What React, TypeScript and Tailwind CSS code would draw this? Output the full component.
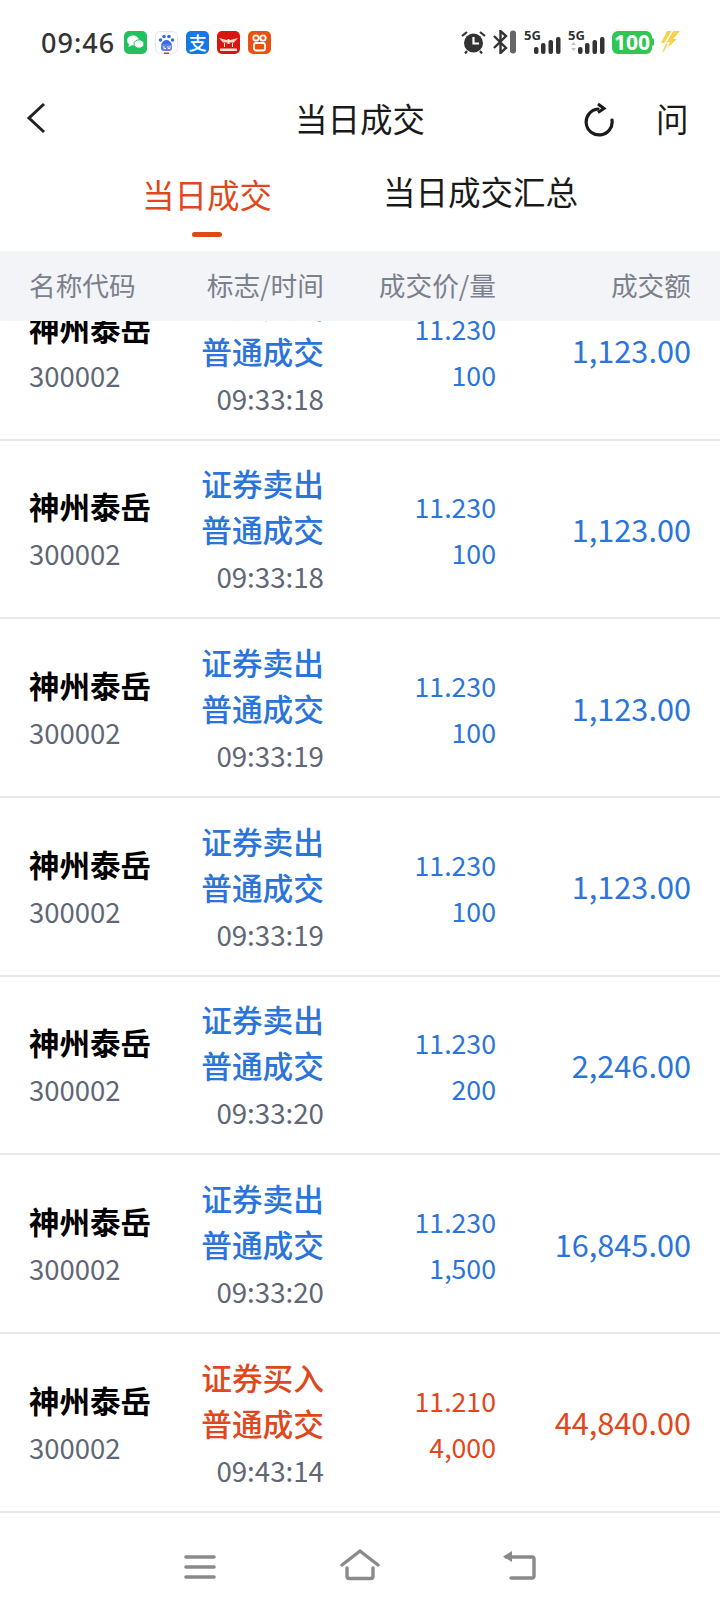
const rows = [
  { tag: "证券卖出", time: "09:33:18", price: "11.230", qty: "100", amount: "1,123.00" },
  { tag: "证券卖出", time: "09:33:18", price: "11.230", qty: "100", amount: "1,123.00" },
  { tag: "证券卖出", time: "09:33:19", price: "11.230", qty: "100", amount: "1,123.00" },
  { tag: "证券卖出", time: "09:33:19", price: "11.230", qty: "100", amount: "1,123.00" },
  { tag: "证券卖出", time: "09:33:20", price: "11.230", qty: "200", amount: "2,246.00" },
  { tag: "证券卖出", time: "09:33:20", price: "11.230", qty: "1,500", amount: "16,845.00" },
  { tag: "证券买入", time: "09:43:14", price: "11.210", qty: "4,000", amount: "44,840.00", buy: true },
];

function AppIcons() {
  return (
    <div className="flex items-center gap-[8px] ml-[9px]">
      {/* wechat */}
      <svg width="23" height="23" viewBox="0 0 23 23">
        <rect width="23" height="23" rx="5" fill="#1fc25f" />
        <ellipse cx="9" cy="9.500" rx="6" ry="5" fill="#fff" />
        <path d="M5 13l-.5 3 3-1.500z" fill="#fff" />
        <ellipse cx="15" cy="13" rx="5" ry="4.200" fill="#fff" stroke="#1fc25f" strokeWidth="1" />
      </svg>
      {/* baidu */}
      <svg width="23" height="23" viewBox="0 0 23 23">
        <rect x="0.500" y="0.500" width="22" height="22" rx="5" fill="#fff" stroke="#e3e6f2" />
        <circle cx="5.500" cy="9" r="1.800" fill="#3a6be0" />
        <circle cx="9" cy="5.500" r="1.800" fill="#3a6be0" />
        <circle cx="14" cy="5.500" r="1.800" fill="#3a6be0" />
        <circle cx="17.500" cy="9" r="1.800" fill="#3a6be0" />
        <path d="M6 14c1-3 3-5 5.500-5s4.500 2 5.500 5z" fill="#3a6be0" />
        <rect x="6" y="13" width="11" height="7" rx="3" fill="#5b83e8" />
        <path d="M9 15v2.500h2M13 15v2.500h2V15" fill="none" stroke="#fff" strokeWidth="0.900" />
        <rect x="9" y="21.500" width="5" height="1.500" fill="#d8342c" />
      </svg>
      {/* alipay */}
      <div className="w-[23px] h-[23px] rounded-[5px] bg-[#1677e6] flex items-center justify-center text-white text-[18px] font-medium leading-none">
        支
      </div>
      {/* red app */}
      <svg width="23" height="23" viewBox="0 0 23 23">
        <rect width="23" height="23" rx="5" fill="#d9160f" />
        <path d="M2 7l9.500 2.500L21 7l-4 4.500H6z" fill="#ffd9c4" />
        <path d="M10.500 8h2v5h-2zM7 12h1v4H7zM15 12h1v4h-1z" fill="#ffe9dc" />
        <rect x="3" y="17.500" width="17" height="2.500" fill="#ffe3d2" />
      </svg>
      {/* kuaishou */}
      <svg width="23" height="23" viewBox="0 0 23 23">
        <rect width="23" height="23" rx="5" fill="#ec4f12" />
        <circle cx="8" cy="7" r="2.700" fill="none" stroke="#fff" strokeWidth="1.800" />
        <circle cx="15" cy="7" r="2.700" fill="none" stroke="#fff" strokeWidth="1.800" />
        <rect x="6" y="12" width="11" height="7.500" rx="2" fill="none" stroke="#fff" strokeWidth="1.800" />
      </svg>
    </div>
  );
}

function Signal({ arrows }: { arrows?: boolean }) {
  return (
    <div className="relative w-[37px] h-[24px] shrink-0">
      <span className="absolute left-0 -top-[1px] text-[13px] font-bold leading-none text-[#333] font-['Noto_Sans',sans-serif]">
        5G
      </span>
      <svg width="37" height="24" viewBox="0 0 37 24" className="absolute left-0 top-0">
        {arrows && <path d="M3 15l2.500-3 2.500 3zM3 18l2.500 3 2.500-3z" fill="#c4c4c4" />}
        <rect x="10" y="17" width="4.500" height="7" rx="2" fill="#333" />
        <rect x="17" y="13" width="4.500" height="11" rx="2" fill="#333" />
        <rect x="24.500" y="10" width="4.500" height="14" rx="2" fill="#333" />
        <rect x="32" y="7" width="4.500" height="17" rx="2" fill="#333" />
      </svg>
    </div>
  );
}

function StatusBar() {
  return (
    <div className="h-[84px] flex items-center justify-between pl-[41px] pr-[40px] shrink-0">
      <div className="flex items-center">
        <span className="text-[27px] font-medium leading-none tracking-[1px] text-[#333] font-['Noto_Sans',sans-serif]">
          09:46
        </span>
        <AppIcons />
      </div>
      <div className="flex items-center gap-[7px]">
        <svg width="25" height="24" viewBox="0 0 25 24">
          <circle cx="12.500" cy="13" r="9.500" fill="#333" />
          <path d="M12.500 7v6.500H18" fill="none" stroke="#fff" strokeWidth="2.200" />
          <path d="M1 6l5-4M24 6l-5-4M6 21l-2 2.500M19 21l2 2.500" stroke="#333" strokeWidth="2.200" />
        </svg>
        <svg width="24" height="24" viewBox="0 0 24 24">
          <path d="M1 6l12 12-5.500 5V1L13 6 1 18" fill="none" stroke="#333" strokeWidth="2.400" />
          <rect x="17" y="0.500" width="6" height="23" rx="3" fill="#666" />
        </svg>
        <Signal />
        <Signal arrows />
        <div className="flex items-center">
          <div className="w-[40px] h-[23px] rounded-[6px] bg-[#2fc653] text-white text-[21px] font-bold leading-none flex items-center justify-center font-['Noto_Sans',sans-serif]">
            100
          </div>
          <div className="w-[2px] h-[8px] bg-[#2fc653] rounded-r-sm" />
        </div>
        <svg width="20" height="24" viewBox="0 0 20 24" className="-ml-px">
          <path d="M7 1h13l-7 8h4L2 23l4-10H1z" fill="#f6d24a" />
          <path d="M13 0L5 13h4L5 21" fill="none" stroke="#fff" strokeWidth="1.500" />
        </svg>
      </div>
    </div>
  );
}

function NavBar() {
  return (
    <div className="relative h-[70px] flex items-center justify-center shrink-0">
      <svg width="20" height="32" viewBox="0 0 20 32" className="absolute left-[26px] top-[18px]">
        <path d="M18 2L3 16l15 14" fill="none" stroke="#222" strokeWidth="3" />
      </svg>
      <span className="text-[32.5px] leading-none text-[#1a1a1a] -mt-[1px]">当日成交</span>
      <svg width="32" height="38" viewBox="0 0 32 38" className="absolute left-[584px] top-[15px]">
        <path d="M14 10A13 13 0 1 0 28 21" fill="none" stroke="#1a1a1a" strokeWidth="3.200" strokeLinecap="round" />
        <path d="M14 5l6 4.500-6 4" fill="none" stroke="#1a1a1a" strokeWidth="3" />
      </svg>
      <span className="absolute left-[656px] top-[18px] text-[32.5px] leading-none text-[#1a1a1a]">问</span>
    </div>
  );
}

function Tabs() {
  return (
    <div className="relative h-[97px] shrink-0">
      <span className="absolute left-[142px] top-[24px] text-[32.5px] leading-none text-[#e0481b]">当日成交</span>
      <span className="absolute left-[192px] top-[78px] w-[30px] h-[5px] rounded-full bg-[#e0481b]" />
      <span className="absolute left-[383px] top-[21px] text-[32.5px] leading-none text-[#1a1a1a]">当日成交汇总</span>
    </div>
  );
}

function Row({ tag, time, price, qty, amount, buy }: (typeof rows)[number] & { buy?: boolean }) {
  const color = buy ? "text-[#e0481b]" : "text-[#2b74d9]";
  return (
    <div className="h-[178.67px] shrink-0 box-border border-b-2 border-[#e6e8ea] flex items-center pl-[29px] pr-[29px]">
      <div className="w-[150px] leading-[46px] pt-[2px]">
        <div className="text-[30.5px] font-bold text-black">神州泰岳</div>
        <div className="text-[27.5px] text-[#5f6675] mt-[1px]">300002</div>
      </div>
      <div className="w-[145px] text-right leading-[47px] pt-[2px]">
        <div className={`text-[30.7px] font-medium -mb-[1px] ${color}`}>{tag}</div>
        <div className={`text-[30.7px] font-medium ${color}`}>普通成交</div>
        <div className="text-[27.7px] text-[#5f6675] mt-[1px]">{time}</div>
      </div>
      <div className={`w-[172px] text-right leading-[46px] text-[26.7px] pt-[3px] ${color}`}>
        <div>{price}</div>
        <div>{qty}</div>
      </div>
      <div className={`flex-1 text-right text-[30.7px] leading-none pt-[1px] ${color}`}>{amount}</div>
    </div>
  );
}

function BottomNav() {
  return (
    <div className="h-[95px] shrink-0 flex items-start justify-center pt-[36px]">
      <div className="relative w-[352px] h-[32px]">
        <svg width="32" height="26" viewBox="0 0 32 26" className="absolute left-0 top-[5px]">
          <path d="M2 3h28M2 13h28M2 23h28" stroke="#8a8a8a" strokeWidth="3.600" strokeLinecap="round" />
        </svg>
        <svg width="40" height="32" viewBox="0 0 40 32" className="absolute left-[156px] top-0">
          <path d="M2 16L20 2l18 14" fill="none" stroke="#8a8a8a" strokeWidth="3.400" strokeLinecap="round" strokeLinejoin="round" />
          <path d="M7 19v8q0 2.500 2.500 2.500h21q2.500 0 2.500-2.500v-8" fill="none" stroke="#8a8a8a" strokeWidth="3.400" strokeLinecap="round" />
        </svg>
        <svg width="36" height="32" viewBox="0 0 36 32" className="absolute left-[318px] top-0">
          <path d="M4 8h26q2 0 2 2v17q0 2-2 2H9" fill="none" stroke="#8a8a8a" strokeWidth="3.400" strokeLinecap="round" />
          <path d="M1 7.500L10 2v11z" fill="#8a8a8a" />
        </svg>
      </div>
    </div>
  );
}

export default function App() {
  return (
    <div className="w-[720px] h-[1608px] bg-white flex flex-col overflow-hidden font-['Noto_Sans_CJK_SC','Noto_Sans',sans-serif]">
      <StatusBar />
      <NavBar />
      <Tabs />
      {/* table head */}
      <div className="h-[70px] shrink-0 bg-[#f2f4f7] flex items-center pl-[29px] pr-[29px] pb-[2px] text-[26.7px] text-[#7b808c] leading-none">
        <div className="w-[150px]">名称代码</div>
        <div className="w-[145px] text-right">标志/时间</div>
        <div className="w-[172px] text-right">成交价/量</div>
        <div className="flex-1 text-right">成交额</div>
      </div>
      {/* list, scrolled part way through first row */}
      <div className="flex-1 overflow-hidden">
        <div className="-mt-[59px] flex flex-col">
          {rows.map((row, i) => (
            <Row key={i} {...row} />
          ))}
        </div>
      </div>
      <BottomNav />
    </div>
  );
}
